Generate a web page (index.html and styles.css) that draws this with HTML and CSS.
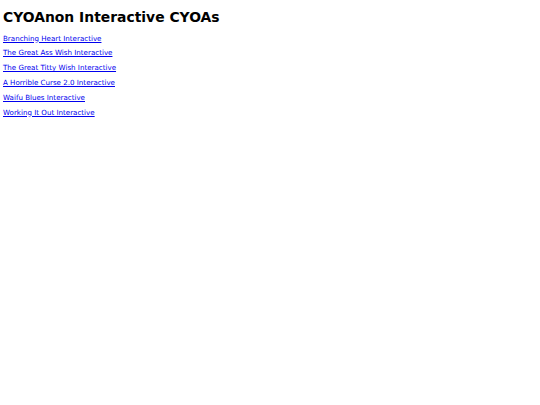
FILE: index.html
```html
<!DOCTYPE html>
<html>
<head>
<meta charset="utf-8">
<link rel="stylesheet" href="styles.css">
</head>
<body>
<h1 class="title">CYOAnon Interactive CYOAs</h1>
<ul class="list">
<li><a href="#">Branching Heart Interactive</a></li>
<li><a href="#">The Great Ass Wish Interactive</a></li>
<li><a href="#">The Great Titty Wish Interactive</a></li>
<li><a href="#">A Horrible Curse 2.0 Interactive</a></li>
<li><a href="#">Waifu Blues Interactive</a></li>
<li><a href="#">Working It Out Interactive</a></li>
</ul>
</body>
</html>
```

FILE: styles.css
```css
body {
  margin: 0;
  padding: 9px 3px;
  font-family: "DejaVu Sans", sans-serif;
  background: #fff;
}
.title {
  margin: 0 0 5.6px;
  font-size: 13.9px;
  line-height: 17px;
  font-weight: bold;
  color: #000;
}
.list {
  list-style: none;
  margin: 0;
  padding: 0;
  display: flex;
  flex-direction: column;
}
.list li {
  font-size: 7.1px;
  line-height: 14.8px;
}
.list a {
  color: #0000ee;
}
```
